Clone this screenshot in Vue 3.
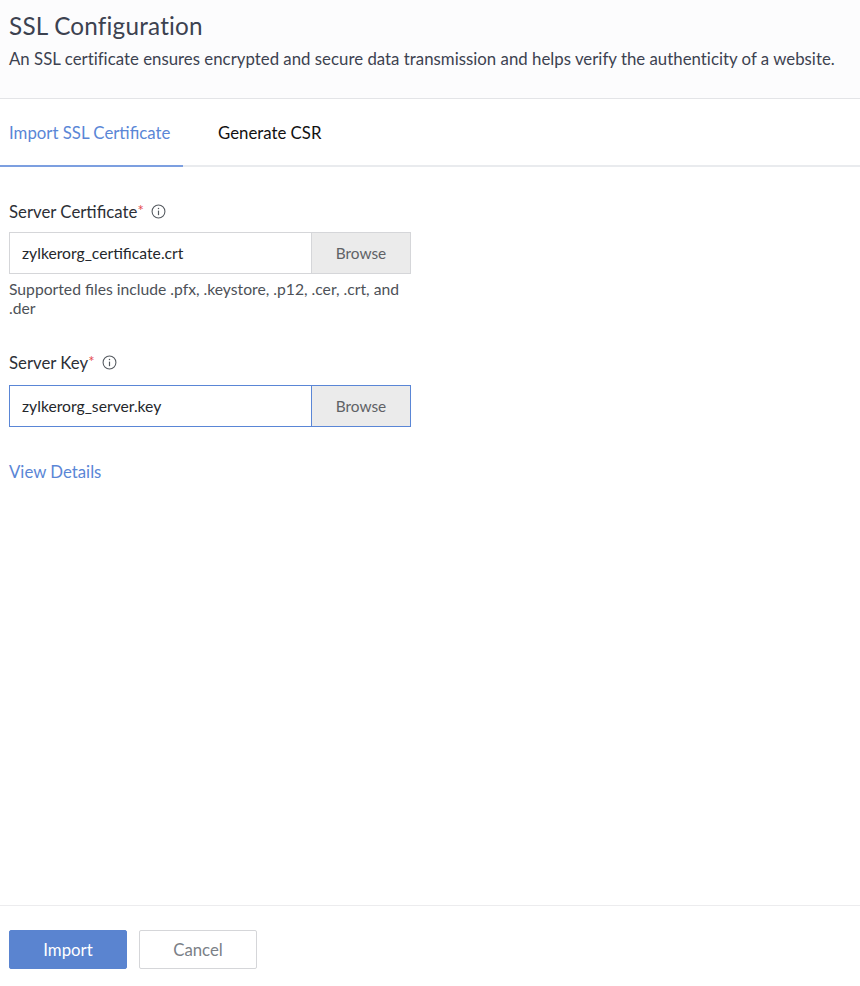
<script setup>
const fields = [
  { label: 'Server Certificate', file: 'zylkerorg_certificate.crt', hint: 'Supported files include .pfx, .keystore, .p12, .cer, .crt, and .der', focused: false },
  { label: 'Server Key', file: 'zylkerorg_server.key', hint: '', focused: true },
]
</script>

<template>
  <div class="page">
    <header class="head">
      <h1 class="title">SSL Configuration</h1>
      <p class="desc">An SSL certificate ensures encrypted and secure data transmission and helps verify the authenticity of a website.</p>
    </header>
    <nav class="tabs">
      <div class="tab active">Import SSL Certificate</div>
      <div class="tab">Generate CSR</div>
    </nav>
    <main class="body">
      <section v-for="f in fields" :key="f.label" class="field">
        <div class="label">
          <span>{{ f.label }}</span><span class="req">*</span>
          <svg class="info" viewBox="0 0 14 14" width="15" height="15" fill="none" stroke="#555a60">
            <circle cx="7" cy="7" r="6" stroke-width="1" />
            <path d="M7 6.2V10.4" stroke-width="1.1" />
            <path d="M7 3.6V4.8" stroke-width="1.2" />
          </svg>
        </div>
        <div class="file" :class="{ focused: f.focused }">
          <div class="name">{{ f.file }}</div>
          <div class="browse">Browse</div>
        </div>
        <p v-if="f.hint" class="hint">{{ f.hint }}</p>
      </section>
      <a class="details">View Details</a>
    </main>
    <footer class="foot">
      <button class="btn primary">Import</button>
      <button class="btn">Cancel</button>
    </footer>
  </div>
</template>

<style scoped>
.page {
  width: 860px;
  height: 986px;
  display: flex;
  flex-direction: column;
  background: #fff;
  font-family: Lato, "Open Sans", sans-serif;
  color: #2c2f36;
}
.head {
  height: 99px;
  box-sizing: border-box;
  padding: 11px 9px 0;
  background: #fcfcfd;
  border-bottom: 1px solid #e3e4e7;
}
.title {
  margin: 0;
  font-size: 24.3px;
  line-height: 30px;
  font-weight: 400;
  color: #3c4250;
  letter-spacing: 0.2px;
}
.desc {
  margin: 7px 0 0;
  font-size: 16.8px;
  line-height: 22px;
  color: #3c4250;
  letter-spacing: 0.02px;
  white-space: nowrap;
}
.tabs {
  height: 68px;
  box-sizing: border-box;
  display: flex;
  border-bottom: 2px solid #e9ebee;
}
.tab {
  height: 68px;
  box-sizing: border-box;
  padding: 0 9px;
  width: 183px;
  line-height: 67px;
  font-size: 16.8px;
  color: #111;
}
.tab + .tab {
  padding-left: 35px;
  width: auto;
}
.tab.active {
  color: #5a86d6;
  border-bottom: 2px solid #7c9fe0;
}
.body {
  flex: 1;
  padding: 0 9px;
}
.field {
  width: 402px;
}
.label {
  display: flex;
  align-items: center;
  height: 22px;
  font-size: 16.8px;
  color: #2c2f36;
}
.field:nth-of-type(1) .label {
  margin-top: 33px;
}
.field:nth-of-type(2) .label {
  margin-top: 33px;
}
.req {
  color: #e5484d;
  font-size: 15px;
  align-self: flex-start;
  line-height: 20px;
}
.info {
  margin-left: 7px;
}
.file {
  margin-top: 10px;
  height: 42px;
  box-sizing: border-box;
  display: flex;
  border: 1px solid #d5d6d9;
}
.field:nth-of-type(2) .file {
  margin-top: 12px;
}
.file.focused {
  border-color: #5a86d6;
}
.name {
  flex: 1;
  padding-left: 12px;
  line-height: 40px;
  font-size: 15.7px;
  color: #24272c;
}
.browse {
  width: 98px;
  border-left: 1px solid #d5d6d9;
  background: #ebebeb;
  text-align: center;
  line-height: 40px;
  font-size: 15.4px;
  color: #5f6266;
}
.focused .browse {
  border-left-color: #5a86d6;
}
.hint {
  margin: 0;
  padding-top: 6px;
  font-size: 15.7px;
  line-height: 19px;
  color: #4d5157;
}
.details {
  display: block;
  margin-top: 34px;
  font-size: 16.8px;
  line-height: 22px;
  color: #5a86d6;
}
.foot {
  height: 81px;
  box-sizing: border-box;
  padding: 24px 9px 0;
  display: flex;
  gap: 12px;
  border-top: 1px solid #ececee;
}
.btn {
  width: 118px;
  height: 39px;
  box-sizing: border-box;
  border: 1px solid #d5d6d9;
  border-radius: 2px;
  background: #fff;
  font-family: inherit;
  font-size: 16.8px;
  color: #7b8087;
}
.btn.primary {
  background: #5a84d0;
  border-color: #5a84d0;
  color: #fff;
}
</style>
